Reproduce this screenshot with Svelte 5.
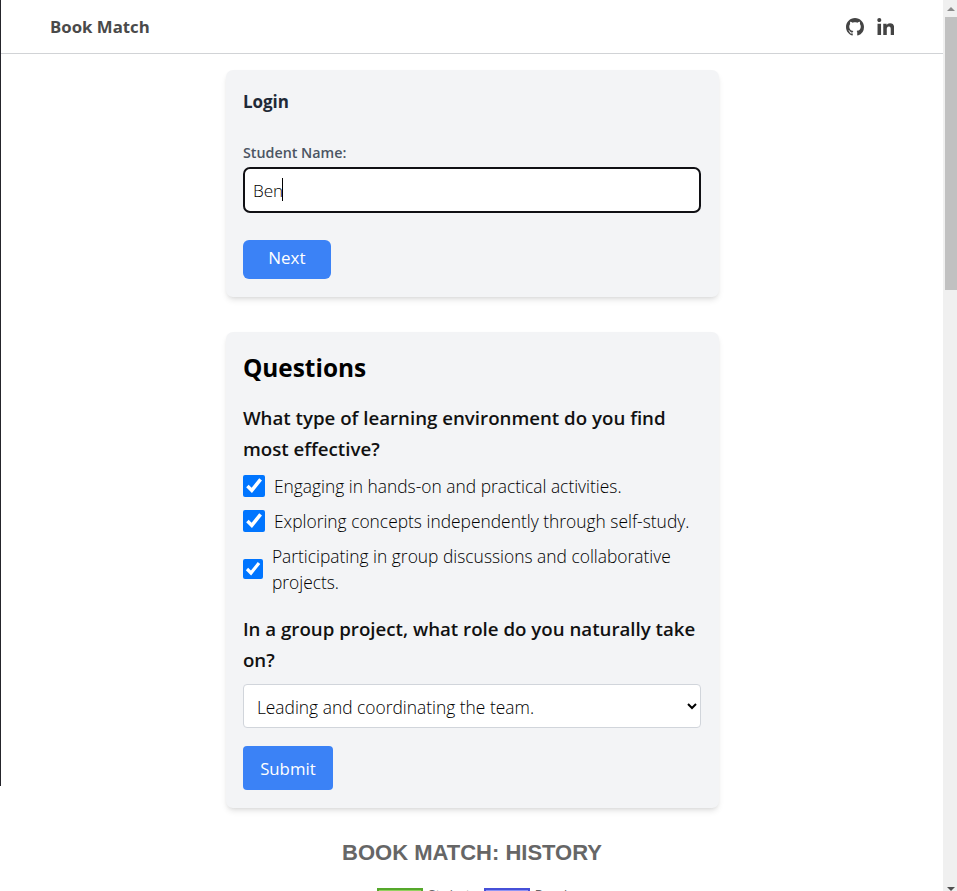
<script>
  let name = $state('Ben');
  let role = $state('Leading and coordinating the team.');
  let activities = $state([
    { label: 'Engaging in hands-on and practical activities.', checked: true },
    { label: 'Exploring concepts independently through self-study.', checked: true },
    { label: 'Participating in group discussions and collaborative projects.', checked: true, wrap: true }
  ]);
</script>

<div class="window">
  <div class="edge"></div>
  <div class="page">
    <header>
      <span class="brand">Book Match</span>
      <nav>
        <svg width="18" height="18" viewBox="0 0 16 16" aria-label="GitHub">
          <path fill="currentColor" d="M8 0C3.58 0 0 3.58 0 8c0 3.54 2.29 6.53 5.47 7.59.4.07.55-.17.55-.38 0-.19-.01-.82-.01-1.49-2.01.37-2.53-.49-2.69-.94-.09-.23-.48-.94-.82-1.13-.28-.15-.68-.52-.01-.53.63-.01 1.08.58 1.23.82.72 1.21 1.87.87 2.33.66.07-.52.28-.87.51-1.07-1.78-.2-3.64-.89-3.64-3.95 0-.87.31-1.59.82-2.15-.08-.2-.36-1.02.08-2.12 0 0 .67-.21 2.2.82.64-.18 1.32-.27 2-.27s1.36.09 2 .27c1.53-1.04 2.2-.82 2.2-.82.44 1.1.16 1.92.08 2.12.51.56.82 1.27.82 2.15 0 3.07-1.87 3.75-3.65 3.95.29.25.54.73.54 1.48 0 1.07-.01 1.93-.01 2.2 0 .21.15.46.55.38A8.01 8.01 0 0 0 16 8c0-4.42-3.58-8-8-8z" />
        </svg>
        <svg width="17.5" height="17" viewBox="0 0 448 448" aria-label="LinkedIn">
          <path fill="currentColor" d="M100.3 448H7.4V148.9h92.9zM53.8 108.1C24.1 108.1 0 83.5 0 53.8a53.8 53.8 0 0 1 107.6 0c0 29.7-24.1 54.3-53.8 54.3zM447.9 448h-92.7V302.4c0-34.7-.7-79.2-48.3-79.2-48.3 0-55.7 37.7-55.7 76.7V448h-92.8V148.9h89.1v40.8h1.3c12.4-23.5 42.7-48.3 87.9-48.3 94 0 111.3 61.9 111.3 142.3V448z" />
        </svg>
      </nav>
    </header>

    <main>
      <section class="card login">
        <h3>Login</h3>
        <label for="student">Student Name:</label>
        <div class="field">
          <input id="student" type="text" bind:value={name} />
          <i class="caret"></i>
        </div>
        <button class="next">Next</button>
      </section>

      <section class="card questions">
        <h2>Questions</h2>
        <p class="ask">What type of learning environment do you find most effective?</p>
        {#each activities as item}
          <label class="option" class:wrap={item.wrap}>
            <input type="checkbox" bind:checked={item.checked} />
            <span>{item.label}</span>
          </label>
        {/each}
        <p class="ask second">In a group project, what role do you naturally take on?</p>
        <select bind:value={role}>
          <option>Leading and coordinating the team.</option>
        </select>
        <button class="submit">Submit</button>
      </section>

      <h4>BOOK MATCH: HISTORY</h4>
      <div class="legend">
        <i class="swatch green"></i><span class="first">Student</span>
        <i class="swatch blue"></i><span>Board</span>
      </div>
    </main>
  </div>
  <div class="scrollbar">
    <svg class="up" width="14" height="17" viewBox="0 0 14 17"><path fill="#8b8b8b" d="M4 11h8L8 7z" /></svg>
    <div class="thumb"></div>
    <svg class="down" width="14" height="4" viewBox="0 0 14 4"><path fill="#505050" d="M4 0h8L8 4z" /></svg>
  </div>
</div>

<style>
  :global(body) { overflow: hidden; background: #fff; }
  .window {
    display: flex;
    height: 891px;
    overflow: hidden;
    font-family: "Open Sans", "Noto Sans", sans-serif;
    font-size: 17.4px;
    color: #000;
  }
  .window * { box-sizing: border-box; }
  .edge { width: 1px; height: 786px; background: #25252b; }
  .page { width: 942px; overflow: hidden; }
  header {
    display: flex;
    justify-content: space-between;
    align-items: center;
    height: 54px;
    padding: 0 49px 0 49px;
    border-bottom: 1px solid #d1d3d6;
    color: #4a4a4a;
  }
  .brand { font-size: 16.8px; font-weight: 700; line-height: 24px; }
  nav { display: flex; gap: 12.5px; color: #444; }
  nav svg { display: block; }
  main { display: flex; flex-direction: column; align-items: center; padding-top: 16px; }
  .card {
    width: 493px;
    padding: 18px 17.4px;
    border-radius: 7px;
    background: #f3f4f6;
    box-shadow: 0 4px 6px -1px rgba(0, 0, 0, 0.1), 0 2px 4px -2px rgba(0, 0, 0, 0.1);
  }
  .login { height: 227px; }
  h2, h3, h4, p { margin: 0; }
  h3 { font-size: 17px; font-weight: 700; line-height: 28px; color: #1f2937; }
  .login label {
    display: block;
    margin-top: 26px;
    font-size: 14.3px;
    font-weight: 600;
    line-height: 22px;
    color: #4b5563;
  }
  .field { position: relative; margin-top: 3px; }
  .field input {
    display: block;
    width: 458px;
    height: 46px;
    padding: 0 8px;
    border: 2px solid #101014;
    border-radius: 7px;
    outline: 0;
    background: #fff;
    font: 300 17.2px "Open Sans", sans-serif;
    color: #000;
  }
  .caret { position: absolute; left: 39px; top: 11px; width: 1px; height: 23px; background: #000; }
  button { display: block; border: 0; background: #3b82f6; color: #fff; font-family: inherit; }
  .next {
    width: 88px;
    height: 39px;
    margin-top: 27px;
    padding: 0 0 4px;
    border-radius: 6px;
    font-size: 17px;
    font-weight: 400;
  }
  .questions { height: 476px; margin-top: 35px; }
  h2 { font-size: 24.4px; font-weight: 700; line-height: 36px; }
  .ask { margin-top: 16px; font-size: 18.7px; font-weight: 600; line-height: 31px; color: #111; }
  .option { display: flex; align-items: center; height: 27px; margin-top: 8px; line-height: 26px; font-weight: 300; color: #000; }
  .ask + .option { margin-top: 8px; }
  .option input { flex: none; width: 22px; height: 22px; margin: 0 9px 0 0; accent-color: #0075ff; }
  .option.wrap { height: 52px; margin-top: 9px; }
  .wrap input { width: 20px; height: 20px; }
  .ask.second { margin-top: 18px; }
  select {
    display: block;
    width: 458px;
    height: 44px;
    margin-top: 9px;
    padding: 2px 2px 0 9px;
    border: 1px solid #d1d5db;
    border-radius: 4px;
    background-color: #fff;
    font: 300 17.4px "Open Sans", sans-serif;
    color: #000;
  }
  .submit { width: 90px; height: 44px; margin-top: 18px; padding: 0; border-radius: 4px; font-size: 16.8px; font-weight: 400; }
  h4 {
    margin-top: 32px;
    font: bold 22px/26px "Liberation Sans", Arial, sans-serif;
    color: #666;
  }
  .legend {
    display: flex;
    width: 190px;
    margin-top: 22px;
    font: 12px/14px "Liberation Sans", Arial, sans-serif;
    color: #666;
  }
  .swatch { flex: none; width: 46px; height: 18px; margin-right: 5px; border: 2px solid; }
  .green { border-color: #55a82b; background: #92d15f; }
  .blue { border-color: #4650d8; background: #8f94f5; }
  .first { width: 56px; }
  .scrollbar { width: 14px; background: #f0f0f0; position: relative; }
  .up { display: block; }
  .thumb { width: 12px; height: 273px; margin-left: 2px; background: #c1c1c1; }
  .down { position: absolute; bottom: 0; left: 0; }
</style>
